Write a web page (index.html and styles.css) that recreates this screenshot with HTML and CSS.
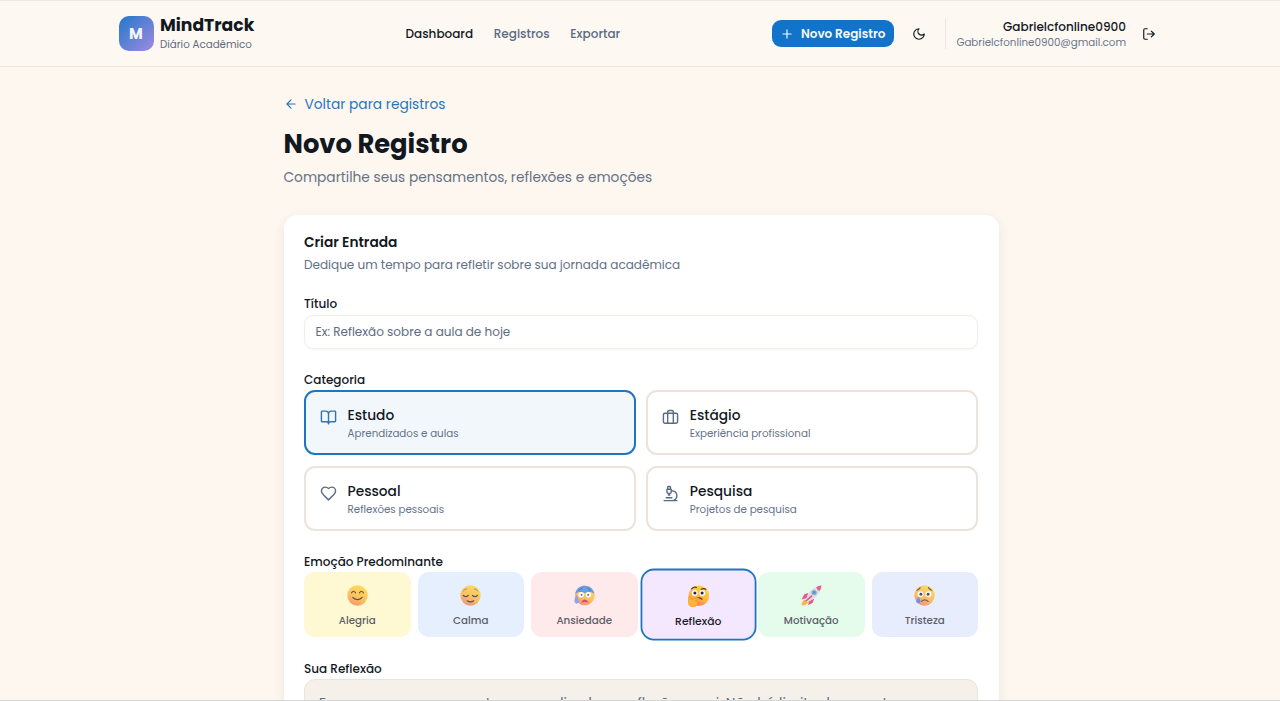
FILE: index.html
```html
<!DOCTYPE html>
<html lang="pt-BR">
<head>
<meta charset="utf-8">
<title>MindTrack</title>
<link rel="stylesheet" href="styles.css">
</head>
<body>
<div class="app">
<header class="header">
  <div class="bar">
    <div class="brand">
      <div class="logo">M</div>
      <div class="brand-text"><span class="brand-name">MindTrack</span><span class="brand-sub">Diário Acadêmico</span></div>
    </div>
    <nav class="nav"><a class="active">Dashboard</a><a>Registros</a><a>Exportar</a></nav>
    <div class="actions">
      <button class="new"><svg class="icon i14" viewBox="0 0 24 24"><path d="M5 12h14M12 5v14"/></svg><span>Novo Registro</span></button>
      <svg class="icon i14 moon" viewBox="0 0 24 24"><path d="M12 3a6 6 0 0 0 9 9 9 9 0 1 1-9-9Z"/></svg>
      <div class="user"><span class="user-name">Gabrielcfonline0900</span><span class="user-mail">Gabrielcfonline0900@gmail.com</span></div>
      <svg class="icon i14 logout" viewBox="0 0 24 24"><path d="M9 21H5a2 2 0 0 1-2-2V5a2 2 0 0 1 2-2h4M16 17l5-5-5-5M21 12H9"/></svg>
    </div>
  </div>
</header>
<main class="main">
  <a class="back"><svg class="icon i14" viewBox="0 0 24 24"><path d="m12 19-7-7 7-7M19 12H5"/></svg><span>Voltar para registros</span></a>
  <h1 class="title">Novo Registro</h1>
  <p class="lead">Compartilhe seus pensamentos, reflexões e emoções</p>
  <section class="card">
    <h2 class="card-title">Criar Entrada</h2>
    <p class="card-sub">Dedique um tempo para refletir sobre sua jornada acadêmica</p>
    <div class="label l1">Título</div>
    <div class="input">Ex: Reflexão sobre a aula de hoje</div>
    <div class="label l2">Categoria</div>
    <div class="cats">
      <div class="cat selected"><svg class="icon i17" viewBox="0 0 24 24"><path d="M12 7v14M3 18a1 1 0 0 1-1-1V4a1 1 0 0 1 1-1h5a4 4 0 0 1 4 4 4 4 0 0 1 4-4h5a1 1 0 0 1 1 1v13a1 1 0 0 1-1 1h-6a3 3 0 0 0-3 3 3 3 0 0 0-3-3z"/></svg><div class="cat-text"><span class="cat-name">Estudo</span><span class="cat-desc">Aprendizados e aulas</span></div></div>
      <div class="cat"><svg class="icon i17" viewBox="0 0 24 24"><path d="M16 20V4a2 2 0 0 0-2-2h-4a2 2 0 0 0-2 2v16"/><rect x="2" y="6" width="20" height="14" rx="2"/></svg><div class="cat-text"><span class="cat-name">Estágio</span><span class="cat-desc">Experiência profissional</span></div></div>
      <div class="cat"><svg class="icon i17" viewBox="0 0 24 24"><path d="M19 14c1.49-1.46 3-3.21 3-5.5A5.5 5.5 0 0 0 16.5 3c-1.76 0-3 .5-4.5 2-1.5-1.5-2.74-2-4.5-2A5.5 5.5 0 0 0 2 8.5c0 2.3 1.5 4.05 3 5.5l7 7Z"/></svg><div class="cat-text"><span class="cat-name">Pessoal</span><span class="cat-desc">Reflexões pessoais</span></div></div>
      <div class="cat"><svg class="icon i17" viewBox="0 0 24 24"><path d="M6 18h8M3 22h18M14 22a7 7 0 1 0 0-14h-1M9 14h2M9 12a2 2 0 0 1-2-2V6h6v4a2 2 0 0 1-2 2ZM12 6V3a1 1 0 0 0-1-1H9a1 1 0 0 0-1 1v3"/></svg><div class="cat-text"><span class="cat-name">Pesquisa</span><span class="cat-desc">Projetos de pesquisa</span></div></div>
    </div>
    <div class="label l3">Emoção Predominante</div>
    <div class="moods">
      <div class="mood joy">
        <svg class="emoji" viewBox="0 0 32 32"><defs><linearGradient id="face" x1=".7" y1="0" x2=".3" y2="1"><stop offset="0" stop-color="#ffd63f"/><stop offset=".6" stop-color="#fdb440"/><stop offset="1" stop-color="#f27d5c"/></linearGradient></defs><circle cx="16" cy="16" r="15.5" fill="url(#face)"/><g fill="none" stroke="#402a32" stroke-width="1.8" stroke-linecap="round"><path d="M7 12q3-5 6 0M19 12q3-5 6 0M9 19q7 6.500 14 0"/></g></svg>
        <span>Alegria</span></div>
      <div class="mood calm">
        <svg class="emoji" viewBox="0 0 32 32"><circle cx="16" cy="16" r="15.5" fill="url(#face)"/><g fill="none" stroke="#402a32" stroke-width="1.8" stroke-linecap="round"><path d="M5 16q4 3.500 7.500 0M19 16q4 3.500 7.500 0M11 24q5 3.500 10 0"/><path stroke="#9a6237" stroke-width="1.300" d="M5 9q2-3 5-3M22 6q3 0 5 3"/></g></svg>
        <span>Calma</span></div>
      <div class="mood fear">
        <svg class="emoji" viewBox="0 0 32 32"><circle cx="16.500" cy="16" r="15" fill="url(#face)"/><path d="M2 14C3 5 9 1 16.500 1S30 6 31.300 14C25 8 20 12 16.500 12S8 8 2 14Z" fill="#3e8ae8"/><path d="M8 8q2-1 4-3M21 5q2 2 4 3" fill="none" stroke="#274c86" stroke-width="1.400" stroke-linecap="round"/><circle cx="11" cy="15" r="4.300" fill="#fff"/><circle cx="22" cy="15" r="4.300" fill="#fff"/><circle cx="11.500" cy="15" r="1.400" fill="#402a32"/><circle cx="21.500" cy="15" r="1.400" fill="#402a32"/><path d="M10.500 27q6-10 12 0-6-2.500-12 0Z" fill="#c9225f"/><path d="M3.500 15Q-1.500 25 2 27.500T7 26Q8 22 3.500 15Z" fill="#6d95ee"/></svg>
        <span>Ansiedade</span></div>
      <div class="mood think">
        <svg class="emoji" viewBox="0 0 32 32"><circle cx="16.500" cy="15.500" r="15" fill="url(#face)"/><circle cx="10.500" cy="11.500" r="4.300" fill="#fff"/><circle cx="21.500" cy="11.500" r="4.300" fill="#fff"/><circle cx="10.800" cy="11.500" r="2.200" fill="#302530"/><circle cx="21.200" cy="11.500" r="2.200" fill="#302530"/><g fill="none" stroke="#5a3425" stroke-width="1.800" stroke-linecap="round"><path d="M6 5.500q3-3.500 7-2M20 6q4-2 6.500 0M12 20q5-3 9 .5"/></g><path d="M1.500 18c0-2 3-2 3 0l.5 3 9-2.500c3-.5 3.300 2 1 2.700l-4 1.500c4 0 4.500 2 3.500 4-1 3.500-3.500 5-7 5C3 31.500 1 28 1.300 24Z" fill="#ffb52e" stroke="#ed8740" stroke-width=".8"/></svg>
        <span>Reflexão</span></div>
      <div class="mood drive">
        <svg class="emoji" viewBox="0 0 32 32"><path d="M6 22l5 5q-4 5-10 4-.5-6 5-9Z" fill="#ffa52b"/><path d="M11 12l-6 2-4 8 8-2ZM20 21l-2 6-7 4 1-8Z" fill="#e4356f"/><path d="M8 21Q12 6 27 2l3 3q-4 15-18 20Z" fill="#dcd4e8"/><path d="M23 3.500Q27 .5 31 1q.5 4-2.500 8-4-1-5.500-5.500Z" fill="#e83c69"/><circle cx="20" cy="11.500" r="4" fill="#7597ce"/><circle cx="20" cy="11.500" r="2.200" fill="#427eb7"/><path d="M8 24l8-7" stroke="#d93274" stroke-width="2.500" stroke-linecap="round"/></svg>
        <span>Motivação</span></div>
      <div class="mood sad">
        <svg class="emoji" viewBox="0 0 32 32"><circle cx="16" cy="16" r="15.500" fill="url(#face)"/><circle cx="10" cy="14" r="4.500" fill="#fff"/><circle cx="22" cy="14" r="4.500" fill="#fff"/><circle cx="10.500" cy="14" r="2.200" fill="#302530"/><circle cx="21.500" cy="14" r="2.200" fill="#302530"/><g fill="none" stroke="#5a3425" stroke-width="1.700" stroke-linecap="round"><path d="M11.500 25q5-4.500 10 0M4.500 8q3-1 5-4M22 4q2 3 5 4"/></g><path d="M7 18Q1 26 5 27.500T10 25Q10 22 7 18Z" fill="#477fe5"/></svg>
        <span>Tristeza</span></div>
    </div>
    <div class="label l4">Sua Reflexão</div>
    <div class="area">Escreva seus pensamentos, aprendizados e reflexões aqui. Não há limite de caracteres.</div>
  </section>
</main>
</div>
</body>
</html>
```
FILE: styles.css
```css
* { box-sizing: border-box; }
body {
  margin: 0;
  background: #fdf7f0;
  color: #12181f;
  font-family: Poppins, Inter, "Liberation Sans", sans-serif;
}
.app { height: 701px; overflow: hidden; border-top: 1px solid #ebe7e3; border-bottom: 1px solid #d5d5d5; }
h1, h2, p { margin: 0; }
.icon { flex: none; fill: none; stroke: currentColor; stroke-width: 2; stroke-linecap: round; stroke-linejoin: round; }
.i14 { width: 14px; height: 14px; }
.i17 { width: 17px; height: 17px; }

.header { height: 66px; border-bottom: 1px solid #f2e5de; background: #fdf8f2; }
.bar { width: 1043px; height: 65px; margin: 0 auto; display: grid; grid-template-columns: 287px 1fr auto; align-items: center; }
.brand { display: flex; align-items: center; gap: 6.500px; }
.logo { width: 35px; height: 35px; border-radius: 10px; background: linear-gradient(135deg, #2278c9, #a08be0); color: #f4f4fb; font-weight: 700; font-size: 15px; line-height: 35px; text-align: center; }
.brand-text { display: flex; flex-direction: column; white-space: nowrap; padding-top: 1px; }
.brand-name { font-size: 17.190px; line-height: 21px; font-weight: 700; }
.brand-sub { font-size: 10.310px; line-height: 17px; color: #5d6b80; }
.nav { display: flex; gap: 20.630px; font-size: 12.030px; font-weight: 500; color: #5a6a82; }
.nav .active { color: #12181f; }
.actions { display: flex; align-items: center; white-space: nowrap; padding-right: 6px; }
.new { display: flex; align-items: center; gap: 6.500px; width: 121.500px; height: 27px; padding: 0 0 0 8px; border: 0; border-radius: 9px; background: #1173c9; color: #f5f8fc; font: inherit; font-size: 12.030px; font-weight: 600; }
.moon { margin-left: 18.500px; }
.user { display: flex; flex-direction: column; align-items: flex-end; margin-left: 19px; padding-left: 10px; border-left: 1px solid #eee6de; height: 31px; }
.user-name { font-size: 12.030px; line-height: 17px; font-weight: 500; }
.user-mail { font-size: 10.310px; line-height: 15px; color: #68768a; }
.logout { margin-left: 15.500px; }

.main { width: 715px; margin: 0 auto; padding: 27px 0 0; transform: translateX(1px); }
.back { display: flex; align-items: center; gap: 7px; height: 20px; font-size: 13.750px; color: #2476bd; }
.back span { line-height: 20px; padding-top: 1px; }
.title { margin-top: 10px; font-size: 25.800px; line-height: 40px; font-weight: 700; }
.lead { margin-top: 3px; font-size: 13.750px; line-height: 21px; color: #657286; }
.card { margin-top: 27px; height: 600px; padding: 18px 20.500px 0 20.500px; background: #fff; border-radius: 14px; box-shadow: 0 4px 12px rgba(90, 60, 20, .09); }
.card-title { font-size: 13.750px; line-height: 20px; font-weight: 600; }
.card-sub { margin-top: 3px; font-size: 12.030px; line-height: 18px; color: #627087; }
.label { font-size: 12.030px; line-height: 16px; font-weight: 500; }
.l1 { margin-top: 22px; }
.l2 { margin-top: 23px; }
.l3 { margin-top: 23px; }
.l4 { margin-top: 24px; }
.input { margin-top: 3px; height: 34px; padding: 0 10.500px; border: 1px solid #f1ede9; border-radius: 9px; font-size: 12.030px; line-height: 32px; color: #5e6c82; box-shadow: 0 1px 2px rgba(0, 0, 0, .04); }
.cats { margin-top: 2px; display: grid; grid-template-columns: 1fr 1fr; gap: 10.500px; }
.cat { display: flex; gap: 10.500px; height: 65px; padding: 14px 14px 12px; border: 2px solid #ece4dc; border-radius: 11px; color: #5a6b82; }
.cat .icon { margin-top: 3px; }
.cat.selected { border-color: #1f76bf; background: #f2f7fc; color: #2378bf; }
.cat-text { display: flex; flex-direction: column; }
.cat-name { font-size: 13.750px; line-height: 20px; font-weight: 500; color: #12181f; }
.cat-desc { font-size: 10.310px; line-height: 15px; color: #637187; }
.moods { margin-top: 2px; display: grid; grid-template-columns: repeat(6, 1fr); gap: 7px; }
.mood { height: 65px; padding-top: 13.500px; border-radius: 11px; display: flex; flex-direction: column; align-items: center; font-size: 10.310px; line-height: 14px; font-weight: 500; color: #5b6068; }
.mood span { margin-top: 7.500px; }
.emoji { width: 21px; height: 21px; opacity: .8; }
.joy { background: #fef9d2; }
.calm { background: #e6effe; }
.fear { background: #feeaea; }
.drive { background: #e5fcec; }
.sad { background: #e8edfe; }
.think { background: #f3e8ff; color: #1b1b2b; transform: scale(1.05); box-shadow: 0 0 0 1.700px #1f76bf; }
.think .emoji { opacity: 1; }
.area { margin-top: 2px; height: 140px; padding: 14px 14px; border: 1px solid #ebe4dc; border-radius: 11px; background: #f5f0ea; font-size: 13.750px; line-height: 20px; color: #5e6c82; }
```
